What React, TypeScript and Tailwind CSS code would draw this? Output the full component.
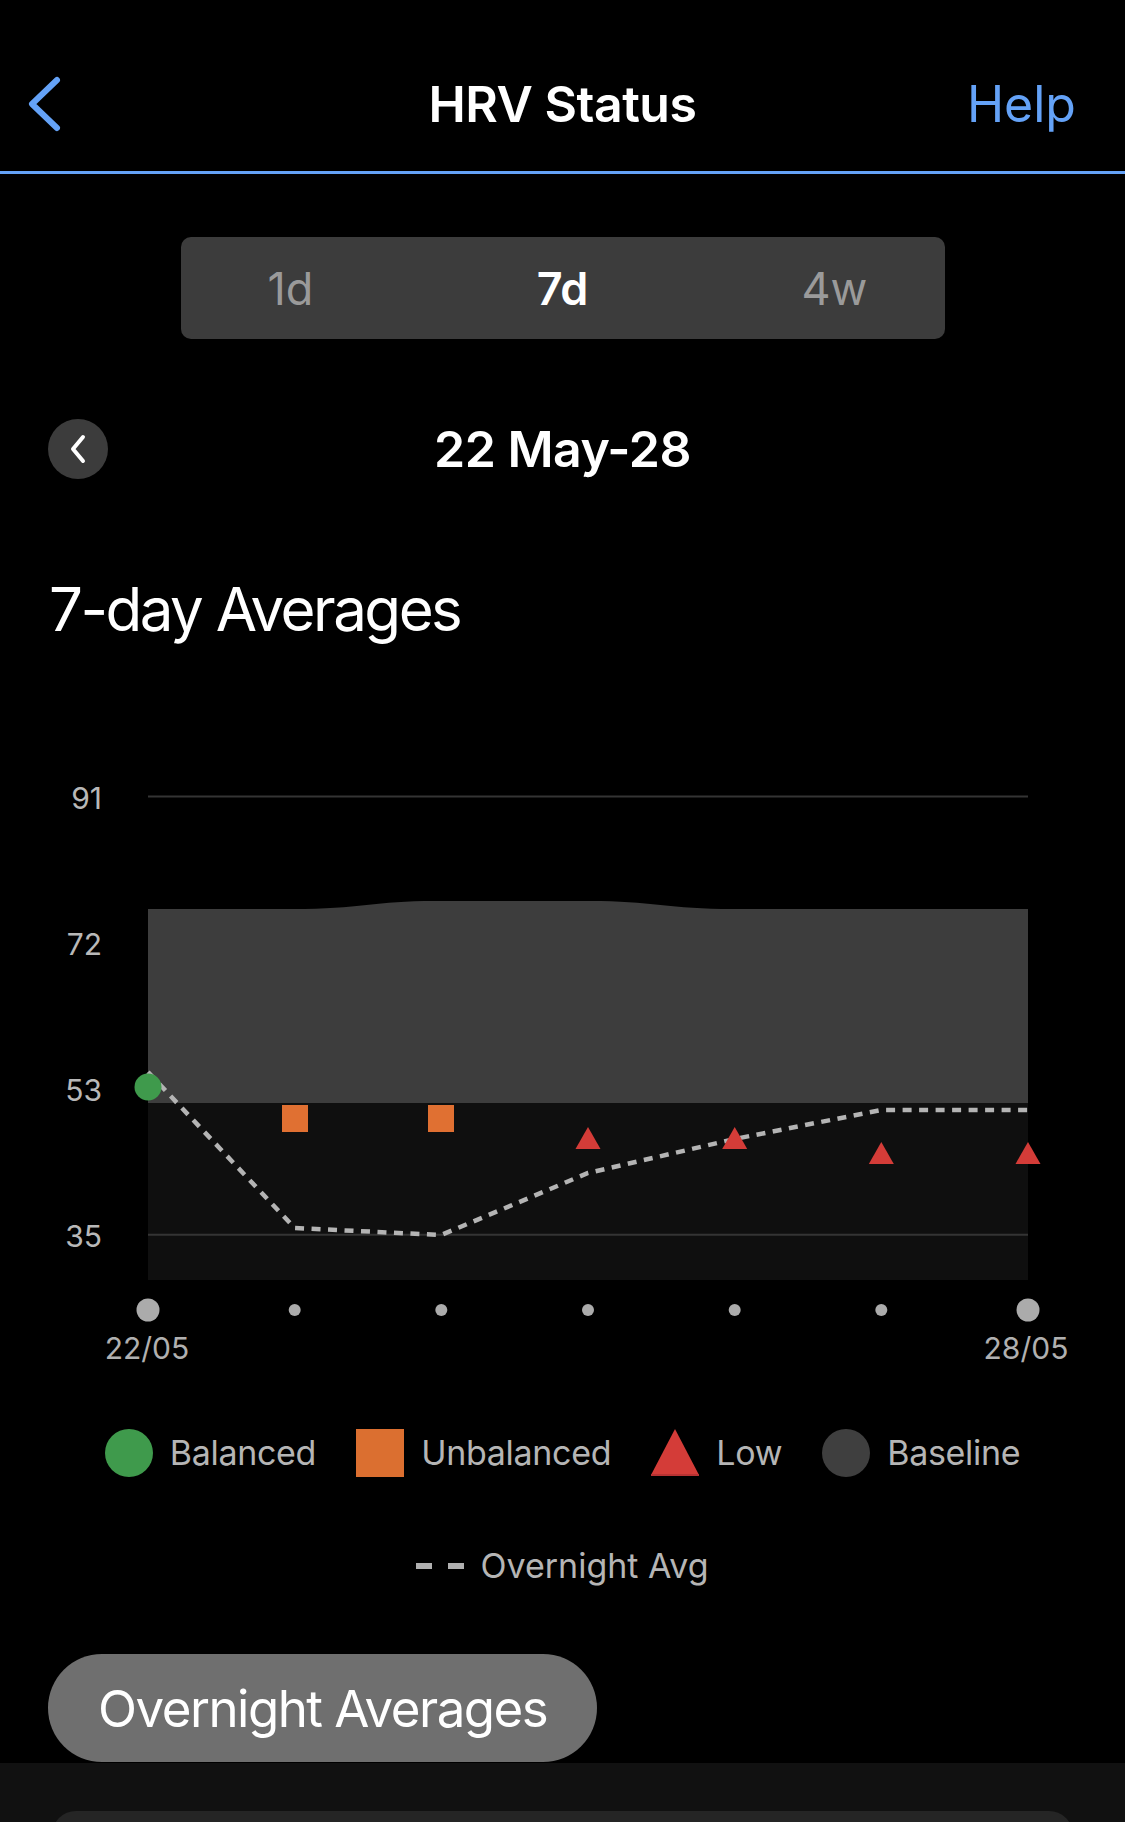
const FONT = "font-['Inter','Noto_Sans',sans-serif]";

// x of each day inside the plot svg (svg starts at page x=120)
const DAYS = [28, 174.7, 321.3, 468, 614.7, 761.3, 908];

const overnight = [347, 503, 510, 448, 414, 385, 385];

function Triangle({ x, y, w = 25, h = 22, color = "#d43c38" }: { x: number; y: number; w?: number; h?: number; color?: string }) {
  return <polygon points={`${x},${y} ${x + w / 2},${y + h} ${x - w / 2},${y + h}`} fill={color} />;
}

function Chart() {
  const dashPts = DAYS.map((x, i) => `${x},${overnight[i]}`).join(" ");

  return (
    <div className="flex mt-[86px]">
      <div className="w-[120px] shrink-0 flex flex-col pr-[18px]">
        {["91", "72", "53", "35"].map((v) => (
          <div key={v} className="h-[146px] flex items-center justify-end text-[30px] text-[#b8b8b8] leading-none">
            {v}
          </div>
        ))}
      </div>
      <svg width="1005" height="600" viewBox="0 0 1005 600" className="shrink-0">
        <rect x="28" y="378" width="880" height="177" fill="#0f0f0f" />
        {[71.5, 218, 364, 509.7].map((y) => (
          <line key={y} x1="28" x2="908" y1={y} y2={y} stroke="#343434" strokeWidth="2" />
        ))}
        <path
          d="M28 184 L173 184 C 240 184, 255 176, 315 176 L470 176 C 530 176, 550 184, 613 184 L908 184 L908 378 L28 378 Z"
          fill="#3d3d3d"
        />
        <polyline points={dashPts} fill="none" stroke="#b4b4b4" strokeWidth="4.5" strokeDasharray="9 7.5" />

        <circle cx="28" cy="362" r="13.5" fill="#3f9a4c" />
        <rect x="162" y="380" width="26" height="27" fill="#e07032" />
        <rect x="308" y="380" width="26" height="27" fill="#e07032" />
        <Triangle x={468} y={402} />
        <Triangle x={614.7} y={402} />
        <Triangle x={761.3} y={417} />
        <Triangle x={908} y={417} />

        {DAYS.map((x, i) => (
          <circle key={x} cx={x} cy="585" r={i === 0 || i === DAYS.length - 1 ? 11.5 : 6} fill="#ababab" />
        ))}
      </svg>
    </div>
  );
}

function LegendItem({ icon, label }: { icon: React.ReactNode; label: string }) {
  return (
    <div className="flex items-center gap-[17px]">
      {icon}
      <span className="text-[34px] leading-none tracking-[-0.3px] text-[#b5b5b5]">{label}</span>
    </div>
  );
}

export default function App() {
  return (
    <div className={`w-[1125px] h-[1822px] bg-black overflow-hidden text-white ${FONT}`}>
      {/* nav bar */}
      <div className="h-[174px] pt-[37px] border-b-[3px] border-[#64a2f7] grid grid-cols-[1fr_auto_1fr] items-center">
        <div className="pl-[26px]">
          <svg width="40" height="60" viewBox="0 0 40 60">
            <path d="M31 6 L6 30 L31 54" fill="none" stroke="#64a2f7" strokeWidth="6" strokeLinecap="round" strokeLinejoin="round" />
          </svg>
        </div>
        <div className="text-[50px] leading-none font-semibold tracking-[-0.5px]">HRV Status</div>
        <div className="flex justify-end pr-[49px] text-[50px] leading-none text-[#64a2f7]">Help</div>
      </div>

      {/* range selector */}
      <div className="mt-[63px] mx-auto w-[764px] h-[102px] rounded-[10px] bg-[#3c3c3c] flex items-center justify-center gap-[172px] text-[45px] leading-none">
        <div className="w-[100px] text-center text-[#9a9a9a]">1d</div>
        <div className="w-[100px] text-center font-semibold">7d</div>
        <div className="w-[100px] text-center text-[#9a9a9a]">4w</div>
      </div>

      {/* date */}
      <div className="mt-[80px] h-[60px] px-[48px] grid grid-cols-[1fr_auto_1fr] items-center">
        <div className="w-[60px] h-[60px] rounded-full bg-[#3c3c3c] flex items-center justify-center">
          <svg width="20" height="30" viewBox="0 0 20 30">
            <path d="M15 3 L5 15 L15 27" fill="none" stroke="#ffffff" strokeWidth="4" strokeLinecap="round" strokeLinejoin="round" />
          </svg>
        </div>
        <div className="text-[50px] leading-none font-semibold tracking-[-0.5px]">22 May-28</div>
        <div />
      </div>

      <h2 className="mt-[100px] ml-[49px] text-[60px] leading-none tracking-[-2.5px]">7-day Averages</h2>

      <Chart />

      <div className="mt-[8px] flex justify-between pl-[97px] pr-[49px] text-[30px] leading-none text-[#b0b0b0]">
        <div className="w-[100px] text-center">22/05</div>
        <div className="w-[100px] text-center">28/05</div>
      </div>

      {/* legend */}
      <div className="mt-[66px] flex justify-center items-center gap-[40px]">
        <LegendItem icon={<div className="w-[48px] h-[48px] rounded-full bg-[#3f9a4c]" />} label="Balanced" />
        <LegendItem icon={<div className="w-[48px] h-[48px] bg-[#db6f30]" />} label="Unbalanced" />
        <LegendItem
          icon={
            <svg width="48" height="48" viewBox="0 0 48 48">
              <polygon points="24,0 48,46 0,46" fill="#d43c38" />
              <rect x="0" y="45" width="48" height="2" fill="#b83232" />
            </svg>
          }
          label="Low"
        />
        <LegendItem icon={<div className="w-[48px] h-[48px] rounded-full bg-[#3f3f3f]" />} label="Baseline" />
      </div>

      <div className="mt-[69px] h-[40px] flex justify-center items-center gap-[16px]">
        <div className="w-[16px] h-[6px] bg-[#b0b0b0]" />
        <div className="w-[16px] h-[6px] bg-[#b0b0b0]" />
        <span className="text-[34px] leading-none text-[#b5b5b5]">Overnight Avg</span>
      </div>

      <div className="mt-[68px] ml-[48px] inline-flex h-[108px] items-center rounded-full bg-[#6f6f6f] px-[50px] text-[51px] leading-none tracking-[-1.5px]">
        Overnight Averages
      </div>

      <div className="mt-[1px] h-[120px] bg-[#111111] pt-[48px] px-[52px]">
        <div className="h-[100px] rounded-t-[24px] bg-[#252525]" />
      </div>
    </div>
  );
}
